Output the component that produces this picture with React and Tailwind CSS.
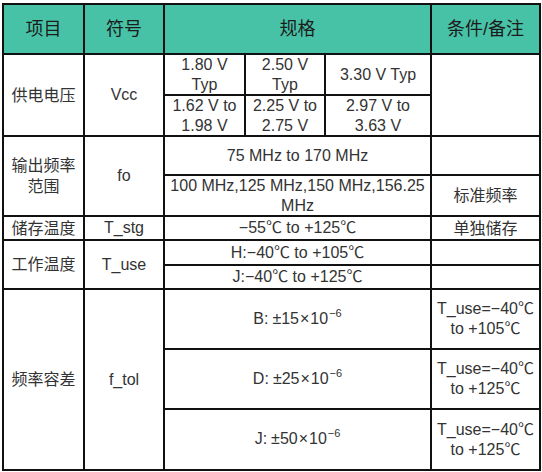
import React from "react";

const H = "bg-[#47c2a6] flex items-center justify-center text-center text-[18px] text-[#1c1c1c]";
const C = "bg-white flex items-center justify-center text-center text-[16px] leading-[20px] text-[#333333]";
const Z = "text-[15px] leading-[21px]";

function Sci({ l, v }) {
  return (
    <span className="whitespace-nowrap">
      {l}:<span className="ml-[4px]">±</span>
      {v}
      <span className="mx-[1px]">×</span>10
      <span className="text-[11px] relative -top-[7px] ml-[1px]">−6</span>
    </span>
  );
}

export default function App() {
  return (
    <div className="w-[542px] h-[472px] bg-white font-['Liberation_Sans','Noto_Sans_CJK_SC',sans-serif] pt-[3px] pl-[2px]">
      <div className="inline-grid bg-[#111] p-[2px] gap-[2px] grid-cols-[79px_78px_79px_78px_104px_107px] grid-rows-[48px_39px_39px_37px_39px_22px_23px_22px_58px_58px_59px]">
        {/* header */}
        <div className={`${H} col-[1/2] row-[1/2]`}>项目</div>
        <div className={`${H} col-[2/3] row-[1/2]`}>符号</div>
        <div className={`${H} col-[3/6] row-[1/2]`}>规格</div>
        <div className={`${H} col-[6/7] row-[1/2]`}>条件/备注</div>

        {/* Vcc */}
        <div className={`${C} ${Z} col-[1/2] row-[2/4]`}>供电电压</div>
        <div className={`${C} col-[2/3] row-[2/4]`}>Vcc</div>
        <div className={`${C} col-[3/4] row-[2/3]`}>
          1.80 V<br />Typ
        </div>
        <div className={`${C} col-[4/5] row-[2/3]`}>
          2.50 V<br />Typ
        </div>
        <div className={`${C} col-[5/6] row-[2/3]`}>3.30 V Typ</div>
        <div className={`${C} col-[6/7] row-[2/4]`}></div>
        <div className={`${C} col-[3/4] row-[3/4]`}>
          1.62 V to<br />1.98 V
        </div>
        <div className={`${C} col-[4/5] row-[3/4]`}>
          2.25 V to<br />2.75 V
        </div>
        <div className={`${C} col-[5/6] row-[3/4]`}>
          2.97 V to<br />3.63 V
        </div>

        {/* fo */}
        <div className={`${C} ${Z} col-[1/2] row-[4/6]`}>
          输出频率<br />范围
        </div>
        <div className={`${C} col-[2/3] row-[4/6]`}>fo</div>
        <div className={`${C} col-[3/6] row-[4/5]`}>75 MHz to 170 MHz</div>
        <div className={`${C} col-[6/7] row-[4/5]`}></div>
        <div className={`${C} col-[3/6] row-[5/6]`}>
          100 MHz,125 MHz,150 MHz,156.25<br />MHz
        </div>
        <div className={`${C} ${Z} col-[6/7] row-[5/6]`}>标准频率</div>

        {/* storage */}
        <div className={`${C} ${Z} col-[1/2] row-[6/7]`}>储存温度</div>
        <div className={`${C} col-[2/3] row-[6/7]`}>T_stg</div>
        <div className={`${C} col-[3/6] row-[6/7]`}>−55℃ to +125℃</div>
        <div className={`${C} ${Z} col-[6/7] row-[6/7]`}>单独储存</div>

        {/* work temp */}
        <div className={`${C} ${Z} col-[1/2] row-[7/9]`}>工作温度</div>
        <div className={`${C} col-[2/3] row-[7/9]`}>T_use</div>
        <div className={`${C} col-[3/6] row-[7/8]`}>H:−40℃ to +105℃</div>
        <div className={`${C} col-[6/7] row-[7/8]`}></div>
        <div className={`${C} col-[3/6] row-[8/9]`}>J:−40℃ to +125℃</div>
        <div className={`${C} col-[6/7] row-[8/9]`}></div>

        {/* tolerance */}
        <div className={`${C} ${Z} col-[1/2] row-[9/12]`}>频率容差</div>
        <div className={`${C} col-[2/3] row-[9/12]`}>f_tol</div>
        <div className={`${C} col-[3/6] row-[9/10]`}>
          <Sci l="B" v="15" />
        </div>
        <div className={`${C} col-[6/7] row-[9/10]`}>
          T_use=−40℃<br />to +105℃
        </div>
        <div className={`${C} col-[3/6] row-[10/11]`}>
          <Sci l="D" v="25" />
        </div>
        <div className={`${C} col-[6/7] row-[10/11]`}>
          T_use=−40℃<br />to +125℃
        </div>
        <div className={`${C} col-[3/6] row-[11/12]`}>
          <Sci l="J" v="50" />
        </div>
        <div className={`${C} col-[6/7] row-[11/12]`}>
          T_use=−40℃<br />to +125℃
        </div>
      </div>
    </div>
  );
}
